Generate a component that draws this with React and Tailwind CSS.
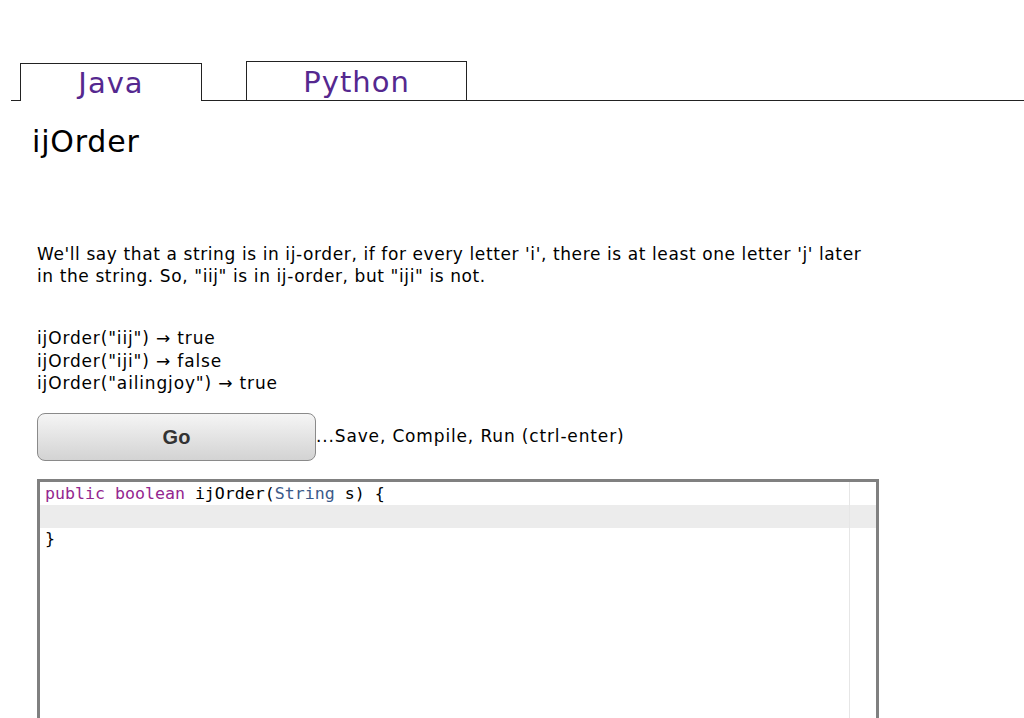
export default function App() {
  const sans = { fontFamily: '"DejaVu Sans", Verdana, sans-serif' };
  return (
    <div className="min-h-[718px] bg-white text-black overflow-hidden" style={sans}>
      {/* tabs */}
      <div className="flex items-end pt-[61px]">
        <div className="w-[11px] shrink-0" />
        <div className="w-[9px] shrink-0 border-b border-[#222]" />
        <div className="w-[182px] h-[38px] shrink-0 border-l border-t border-r border-[#222] flex items-center justify-center text-[29px] tracking-[1px] text-[#55288f] pt-[2px]">
          Java
        </div>
        <div className="w-[44px] shrink-0 border-b border-[#222]" />
        <div className="w-[221px] h-[40px] shrink-0 border border-[#222] flex items-center justify-center text-[29px] tracking-[1px] text-[#55288f] pt-[4px]">
          Python
        </div>
        <div className="flex-1 border-b border-[#222]" />
      </div>

      <div className="pl-[37px]">
        <h1 className="-ml-[5px] mt-[23px] text-[30px] leading-[36px] tracking-[0.8px] font-normal">ijOrder</h1>

        <p className="mt-[83px] text-[17px] leading-[22px] tracking-[0.6px] w-[840px]">
          We'll say that a string is in ij-order, if for every letter 'i', there is at least one letter 'j' later in the string. So, "iij" is in ij-order, but "iji" is not.
        </p>

        <div className="mt-[40px] text-[17px] leading-[22.5px] tracking-[0.85px]">
          <div>ijOrder("iij") → true</div>
          <div>ijOrder("iji") → false</div>
          <div>ijOrder("ailingjoy") → true</div>
        </div>

        <div className="mt-[18px] flex items-center">
          <button className="w-[279px] h-[48px] rounded-[8px] border border-[#8a8a8a] bg-gradient-to-b from-[#f5f5f5] to-[#d3d3d3] text-[20px] font-bold text-[#333]" style={{ fontFamily: '"Liberation Sans", Arial, sans-serif' }}>
            Go
          </button>
          <span className="text-[17px] tracking-[0.85px]">...Save, Compile, Run (ctrl-enter)</span>
        </div>

        <div className="mt-[18px] w-[842px] h-[260px] border-[3px] border-b-0 border-[#808080] relative" style={{ fontFamily: '"DejaVu Sans Mono", monospace' }}>
          <div className="absolute top-0 bottom-0 left-[809px] w-[1px] bg-[#e6e6e6]" />
          <div className="pt-[1px] text-[16.6px] leading-[22.5px]">
            <div className="pl-[5px]">
              <span className="text-[#94268f]">public</span> <span className="text-[#94268f]">boolean</span> ijOrder(<span className="text-[#3b5a8a]">String</span> s) {"{"}
            </div>
            <div className="pl-[5px] bg-[#ececec] h-[22.5px]"></div>
            <div className="pl-[5px]">{"}"}</div>
          </div>
        </div>
      </div>
    </div>
  );
}
